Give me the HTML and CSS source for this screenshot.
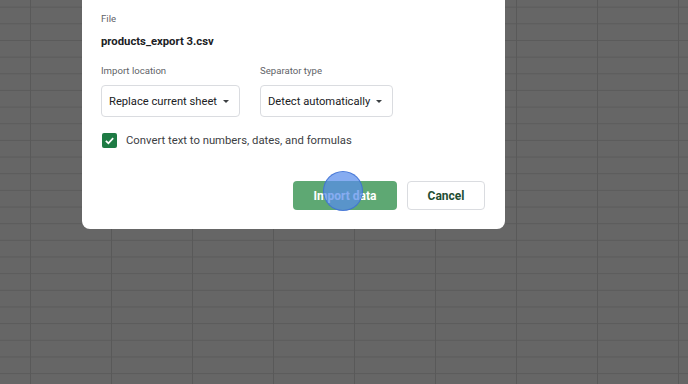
FILE: index.html
```html
<!DOCTYPE html>
<html>
<head>
<meta charset="utf-8">
<link rel="stylesheet" href="styles.css">
</head>
<body>
<div class="sheet">
  <div class="dialog">
    <div class="label">File</div>
    <div class="filename">products_export 3.csv</div>
    <div class="fields">
      <div class="field">
        <div class="label">Import location</div>
        <div class="select select-loc"><span class="select-text">Replace current sheet</span><span class="caret"></span></div>
      </div>
      <div class="field">
        <div class="label">Separator type</div>
        <div class="select select-sep"><span class="select-text">Detect automatically</span><span class="caret"></span></div>
      </div>
    </div>
    <div class="check-row">
      <span class="checkbox">
        <svg width="11" height="11" viewBox="0 0 12 12"><path d="M2 6.3 L4.8 9 L10 3.4" fill="none" stroke="#fff" stroke-width="1.9"/></svg>
      </span>
      <span class="check-text">Convert text to numbers, dates, and formulas</span>
    </div>
    <div class="actions">
      <div class="btn btn-primary">Import data<span class="click"></span></div>
      <div class="btn btn-secondary">Cancel</div>
    </div>
  </div>
</div>
</body>
</html>
```
FILE: styles.css
```css
html, body {
  margin: 0;
  padding: 0;
}
body {
  width: 688px;
  height: 384px;
  overflow: hidden;
  font-family: Roboto, "Liberation Sans", sans-serif;
}
.sheet {
  width: 688px;
  height: 384px;
  background-color: #666666;
  background-image:
    linear-gradient(to right, #595959 1px, transparent 1px),
    linear-gradient(to bottom, #5b5b5b 1px, transparent 1px);
  background-size: 81px 100%, 100% 16.67px;
  background-position: 30px 0, 0 6.67px;
  overflow: hidden;
}
.dialog {
  margin-left: 82px;
  width: 384px;
  background: #fff;
  border-radius: 0 0 8px 8px;
  padding: 12px 20px 19px 19px;
}
.label {
  font-size: 9.6px;
  line-height: 14px;
  color: #5f6368;
}
.filename {
  margin-top: 8px;
  font-size: 11.3px;
  line-height: 16px;
  font-weight: 700;
  color: #202124;
}
.fields {
  display: flex;
  gap: 20px;
  margin-top: 14px;
}
.select {
  margin-top: 7px;
  height: 32px;
  box-sizing: border-box;
  border: 1px solid #dadce0;
  border-radius: 4px;
  display: flex;
  align-items: center;
  justify-content: space-between;
  padding: 0 12px 0 7px;
  font-size: 11.2px;
  color: #202124;
  white-space: nowrap;
}
.select-loc { width: 139px; }
.select-sep { width: 133px; }
.caret {
  margin-left: 6px;
  width: 0;
  height: 0;
  border-left: 3.5px solid transparent;
  border-right: 3.5px solid transparent;
  border-top: 3.5px solid #3c4043;
}
.check-row {
  margin-top: 15px;
  height: 16px;
  display: flex;
  align-items: center;
}
.checkbox {
  width: 15px;
  height: 15px;
  border-radius: 2px;
  background: #1e7b44;
  display: flex;
  align-items: center;
  justify-content: center;
  margin-left: 1px;
}
.check-text {
  margin-left: 9px;
  font-size: 11.3px;
  color: #3c4043;
}
.actions {
  margin-top: 33px;
  display: flex;
  justify-content: flex-end;
  gap: 10px;
}
.btn {
  height: 29px;
  border-radius: 4px;
  display: flex;
  align-items: center;
  justify-content: center;
  font-size: 12px;
  font-weight: 700;
  box-sizing: border-box;
  position: relative;
}
.btn-primary {
  width: 104px;
  background: #5ea873;
  color: #fff;
}
.btn-secondary {
  width: 78px;
  background: #fff;
  border: 1px solid #dadce0;
  color: #1f4e33;
}
.click {
  position: absolute;
  left: 30px;
  top: -10px;
  width: 38px;
  height: 38px;
  border-radius: 50%;
  background: rgba(88, 140, 235, 0.72);
  border: 1.5px solid rgba(60, 110, 210, 0.8);
}
```
